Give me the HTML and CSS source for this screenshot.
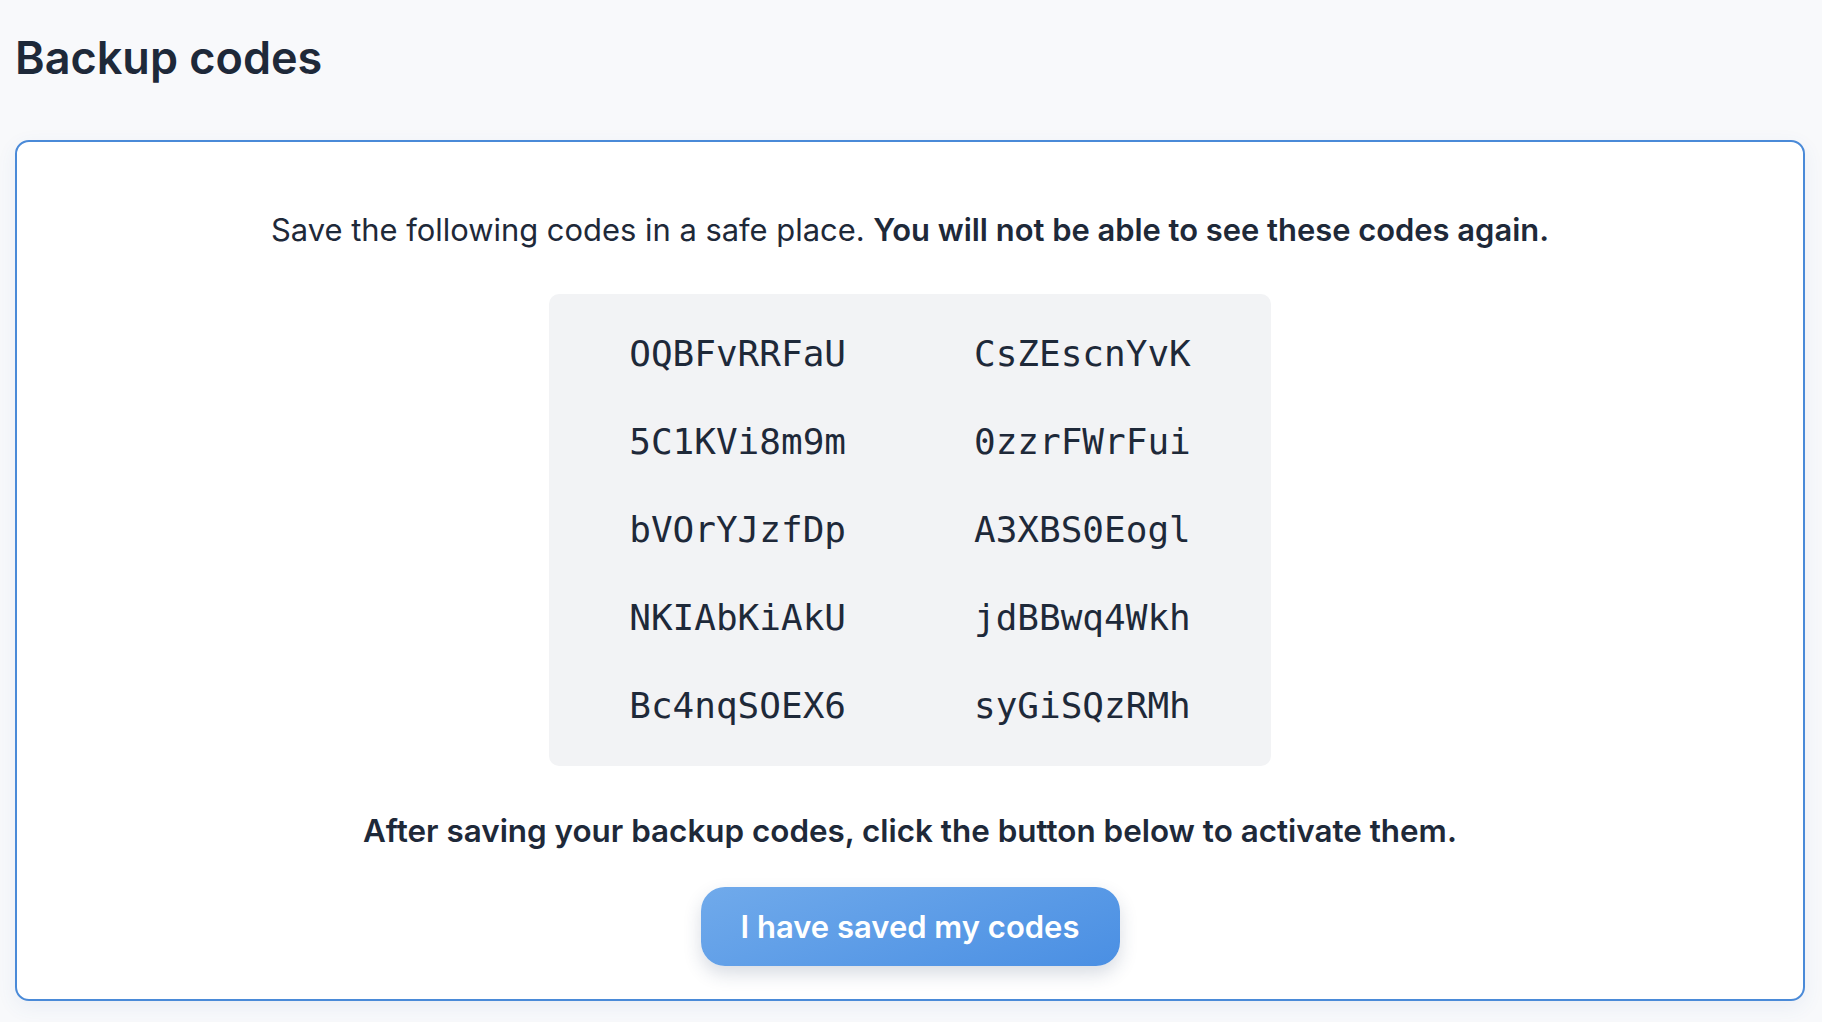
FILE: index.html
```html
<!DOCTYPE html>
<html lang="en">
<head>
<meta charset="utf-8">
<title>Backup codes</title>
<link rel="stylesheet" href="styles.css">
</head>
<body>
<main class="page">
  <h1 class="title">Backup codes</h1>
  <section class="card">
    <p class="intro">Save the following codes in a safe place. <strong>You will not be able to see these codes again.</strong></p>
    <div class="codes">
      <span>OQBFvRRFaU</span><span>CsZEscnYvK</span>
      <span>5C1KVi8m9m</span><span>0zzrFWrFui</span>
      <span>bVOrYJzfDp</span><span>A3XBS0Eogl</span>
      <span>NKIAbKiAkU</span><span>jdBBwq4Wkh</span>
      <span>Bc4nqSOEX6</span><span>syGiSQzRMh</span>
    </div>
    <p class="note">After saving your backup codes, click the button below to activate them.</p>
    <button class="btn" type="button">I have saved my codes</button>
  </section>
</main>
</body>
</html>
```
FILE: styles.css
```css
html, body {
  margin: 0;
  padding: 0;
}
body {
  background: #f8f9fb;
  font-family: Inter, "Noto Sans", sans-serif;
  color: #1e2939;
}
.page {
  padding: 0 17px 23px 15px;
}
.title {
  margin: 0;
  padding: 30px 0 0 0;
  font-size: 45px;
  line-height: 56px;
  font-weight: 600;
  height: 140px;
  box-sizing: border-box;
}
.card {
  background: #fff;
  border: 2px solid #4a8ad8;
  border-radius: 14px;
  box-shadow: 0 6px 20px rgba(60, 100, 180, 0.08);
  padding: 68px 20px 33px;
  display: flex;
  flex-direction: column;
  align-items: center;
}
.intro {
  margin: 0;
  font-size: 30.9px;
  line-height: 40px;
  font-weight: 400;
}
.intro strong {
  font-weight: 600;
}
.codes {
  margin-top: 44px;
  background: #f2f3f5;
  border-radius: 10px;
  padding: 16px 80px;
  display: grid;
  grid-template-columns: auto auto;
  column-gap: 128px;
  font-family: "DejaVu Sans Mono", monospace;
  font-size: 36px;
  line-height: 88px;
}
.note {
  margin: 45px 0 0;
  font-size: 31.4px;
  line-height: 40px;
  font-weight: 600;
}
.btn {
  margin-top: 36px;
  width: 419px;
  height: 79px;
  border: none;
  border-radius: 24px;
  background: linear-gradient(160deg, #70aaeb 0%, #4a8fe3 100%);
  color: #fff;
  font-family: Inter, "Noto Sans", sans-serif;
  font-size: 31px;
  font-weight: 600;
  box-shadow: 0 8px 18px rgba(40, 60, 100, 0.18);
  cursor: pointer;
}
```
